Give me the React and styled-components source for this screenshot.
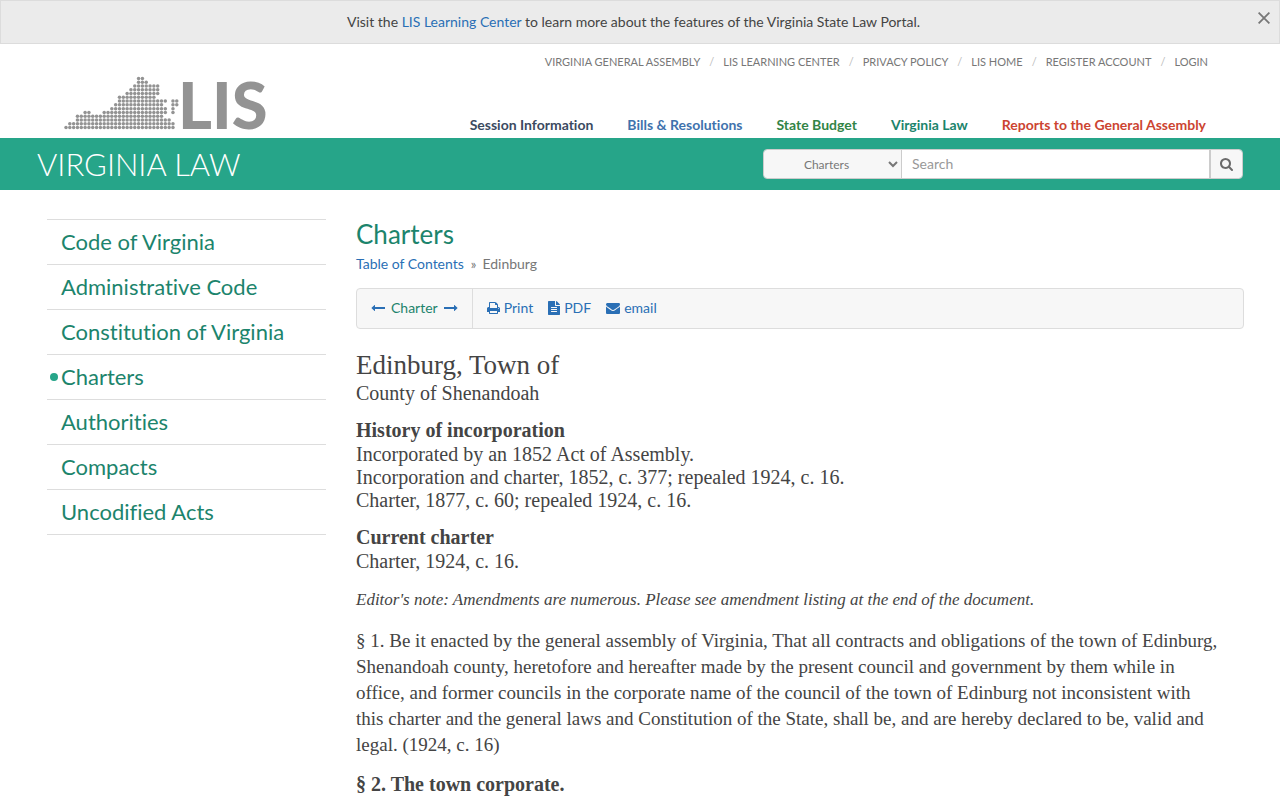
import React, { useState } from 'react';
import styled, { createGlobalStyle } from 'styled-components';

const GlobalStyle = createGlobalStyle`
  * {
    box-sizing: border-box;
  }

  body {
    margin: 0;
    background: #fff;
    color: #444;
    font-family: Lato, 'Liberation Sans', sans-serif;
    font-size: 14px;
    font-variant-ligatures: none;
    line-height: 20px;
  }

  a {
    color: #2a6fb5;
    text-decoration: none;
  }

  a:hover {
    text-decoration: underline;
  }
`;

const Notice = styled.div`
  display: grid;
  grid-template-columns: 24px 1fr 38px;
  padding: 11px 0 11px 1px;
  border: 1px solid #dcdcdc;
  background: #ebebeb;
  text-align: center;
`;

const NoticeText = styled.p`
  grid-column: 2;
  margin: 0;
`;

const CloseButton = styled.button`
  align-self: start;
  justify-self: end;
  display: flex;
  padding: 0 9px 0 0;
  border: none;
  background: none;
  color: #777;
  cursor: pointer;
`;

const Header = styled.header`
  display: flex;
  justify-content: space-between;
  height: 94px;
  padding: 8px 72px 0 64px;
`;

const LogoLink = styled.a`
  display: flex;
  align-items: flex-end;
  padding-bottom: 8px;

  svg {
    overflow: visible;
  }
`;

const HeaderLinks = styled.div`
  display: flex;
  flex-direction: column;
  align-items: flex-end;
  justify-content: space-between;
`;

const UtilityNav = styled.ul`
  display: flex;
  margin: 0;
  padding: 0;
  list-style: none;
  font-size: 11px;
  text-transform: uppercase;

  li + li::before {
    content: '/';
    padding: 0 9px;
    color: #bbb;
  }

  a {
    color: #777;
  }
`;

const PortalNav = styled.nav`
  display: flex;
  gap: 34px;
  padding: 0 2px 3px 0;
  font-weight: 700;
`;

const PortalLink = styled.a`
  color: ${props => props.$color};
`;

const Banner = styled.div`
  display: flex;
  align-items: center;
  justify-content: space-between;
  height: 52px;
  padding: 0 37px;
  background: #26a589;
`;

const SiteTitle = styled.a`
  color: #fff;
  font-size: 31px;
  font-weight: 300;
  line-height: 52px;
  text-transform: uppercase;
`;

const SearchForm = styled.form`
  display: flex;
  width: 480px;
  height: 30px;
  border: 1px solid #ccc;
  border-radius: 4px;
  overflow: hidden;
`;

const ScopeSelect = styled.select`
  width: 138px;
  border: none;
  border-right: 1px solid #ccc;
  background: #f7f7f7;
  color: #777;
  font-family: inherit;
  font-size: 12px;
  text-align: center;
`;

const SearchInput = styled.input`
  flex: 1;
  min-width: 0;
  padding: 0 10px 2px;
  border: none;
  color: #555;
  font-family: inherit;
  font-size: 14px;

  &::placeholder {
    color: #999;
  }
`;

const SearchButton = styled.button`
  display: flex;
  align-items: center;
  justify-content: center;
  width: 33px;
  padding: 0;
  border: none;
  border-left: 2px solid #ccc;
  background: #f7f7f7;
  color: #6b6b6b;
  cursor: pointer;
`;

const Page = styled.div`
  display: grid;
  grid-template-columns: 279px minmax(0, 1fr);
  align-items: start;
  gap: 30px;
  padding: 29px 36px 40px 47px;
`;

const SideNav = styled.ul`
  margin: 0;
  padding: 0;
  border-top: 1px solid #ddd;
  list-style: none;
`;

const SideItem = styled.li`
  display: flex;
  align-items: center;
  height: 45px;
  border-bottom: 1px solid #ddd;
  font-size: 22px;

  &::before {
    content: '';
    width: 8px;
    height: 8px;
    margin: 0 3px;
    border-radius: 50%;
    background: ${props => (props.$active ? '#26a589' : 'transparent')};
  }

  a {
    color: #1c846c;
  }
`;

const SectionTitle = styled.h2`
  margin: 0;
  color: #1c846c;
  font-size: 26px;
  font-weight: 400;
  line-height: 30px;
`;

const Breadcrumb = styled.nav`
  margin-top: 5px;
  color: #777;

  span {
    padding: 0 6px 0 7px;
    font-size: 13px;
  }
`;

const Toolbar = styled.div`
  display: flex;
  height: 41px;
  margin: 14px 0 20px;
  border: 1px solid #ddd;
  border-radius: 4px;
  background: #f7f7f7;
`;

const ToolGroup = styled.div`
  display: flex;
  align-items: center;
  gap: ${props => props.$gap};
  padding: 0 14px 2px;

  & + & {
    padding: 0 14px 2px;
    border-left: 1px solid #ddd;
  }
`;

const ToolLink = styled.a`
  display: flex;
  align-items: center;
  gap: 4px;
`;

const ChapterLink = styled.a`
  color: #1c846c;
`;

const Document = styled.article`
  font-family: 'Liberation Serif', serif;
  font-size: 20px;
  line-height: 23px;
`;

const DocTitle = styled.h1`
  margin: 0;
  font-size: 27px;
  font-weight: 400;
  line-height: 33px;
`;

const DocHeading = styled.h3`
  margin: 0;
  font-size: 20px;
  line-height: 25px;
`;

const DocBlock = styled.p`
  margin: 0 0 13px;
`;

const EditorNote = styled.p`
  margin: 0 0 17px;
  padding-top: 2px;
  font-size: 17px;
  font-style: italic;
`;

const Statute = styled.p`
  margin: 0 0 14px;
  padding-right: 24px;
  font-size: 19px;
  line-height: 26px;
`;

const VIRGINIA_ROWS = [
  [[19, 20]],
  [[19, 21]],
  [[18, 24]],
  [[17, 24]],
  [[16, 24]],
  [[14, 23]],
  [[14, 26], [28, 29]],
  [[13, 25], [28, 29]],
  [[12, 26], [28, 28]],
  [[5, 6], [10, 26], [28, 28]],
  [[3, 25]],
  [[3, 27]],
  [[1, 28]],
  [[0, 28]],
];

const DOT_STEP = 3.82;

const Logo = () => (
  <svg width="204" height="54" viewBox="0 0 204 54" fill="#939393" role="img" aria-label="LIS">
    {VIRGINIA_ROWS.map((spans, row) =>
      spans.map(([from, to]) =>
        Array.from({ length: to - from + 1 }, (_, i) => (
          <circle
            key={`${row}-${from + i}`}
            cx={2 + (from + i) * DOT_STEP}
            cy={2.4 + row * 3.78}
            r="1.75"
          />
        ))
      )
    )}
    <text x="114" y="53" fontFamily="Lato, 'Liberation Sans', sans-serif" fontSize="65" fontWeight="900">
      LIS
    </text>
  </svg>
);

const GLYPHS = {
  search: {
    width: 1664,
    d: 'M1152 832q0-185-131.5-316.5t-316.5-131.5-316.5 131.5-131.5 316.5 131.5 316.5 316.5 131.5 316.5-131.5 131.5-316.5zm512 832q0 52-38 90t-90 38q-54 0-90-38l-343-342q-179 124-399 124-143 0-273.5-55.5t-225-150-150-225-55.5-273.5 55.5-273.5 150-225 225-150 273.5-55.5 273.5 55.5 225 150 150 225 55.5 273.5q0 220-124 399l343 343q37 37 37 90z',
  },
  print: {
    width: 1664,
    d: 'M384 1536h896v-256h-896v256zM384 896h896v-384h-160q-40 0-68-28t-28-68v-160h-640v640zM1536 960q0-26-19-45t-45-19-45 19-19 45 19 45 45 19 45-19 19-45zM1664 960v416q0 13-9.5 22.5t-22.5 9.5h-224v160q0 40-28 68t-68 28h-960q-40 0-68-28t-28-68v-160h-224q-13 0-22.5-9.5t-9.5-22.5v-416q0-79 56.5-135.5t135.5-56.5h64v-544q0-40 28-68t68-28h672q40 0 88 20t76 48l152 152q28 28 48 76t20 88v256h64q79 0 135.5 56.5t56.5 135.5z',
  },
  file: {
    width: 1536,
    d: 'M1024 0v512h512q-4-76-68-140l-304-304q-64-64-140-68zM992 640q-40 0-68-28t-28-68v-544h-800q-40 0-68 28t-28 68v1600q0 40 28 68t68 28h1344q40 0 68-28t28-68v-1056zM384 800q0-32 32-32h704q32 0 32 32v64q0 32-32 32h-704q-32 0-32-32zM1152 1376q0 32-32 32h-704q-32 0-32-32v-64q0-32 32-32h704q32 0 32 32zM1152 1120q0 32-32 32h-704q-32 0-32-32v-64q0-32 32-32h704q32 0 32 32z',
  },
  envelope: {
    width: 1792,
    d: 'M1792 710v794q0 66-47 113t-113 47h-1472q-66 0-113-47t-47-113v-794q44 49 101 87 362 246 497 345 57 42 92.5 65.5t94.5 48 110 24.5h2q51 0 110-24.5t94.5-48 92.5-65.5q170-123 498-345 57-39 100-87zm0-294q0 79-49 151t-122 123q-376 261-468 325-10 7-42.5 31t-54 38.5-52 32.5-57.5 27-50 9h-2q-23 0-50-9t-57.5-27-52-32.5-54-38.5-42.5-31q-91-64-262-182.5t-205-142.5q-62-42-117-115.5t-55-136.5q0-78 41.5-130t118.5-52h1472q65 0 112.5 47t47.5 113z',
  },
  left: {
    width: 1792,
    d: 'M1792 800v192q0 14-9 23t-23 9h-1248v224q0 21-19 29t-35-5l-384-350q-10-10-10-23 0-14 10-24l384-354q16-14 35-6 19 9 19 29v224h1248q14 0 23 9t9 23z',
  },
  right: {
    width: 1792,
    d: 'M0 800v192q0 14 9 23t23 9h1248v224q0 21 19 29t35-5l384-350q10-10 10-23 0-14-10-24l-384-354q-16-14-35-6-19 9-19 29v224h-1248q-14 0-23 9t-9 23z',
  },
};

const Glyph = ({ name }) => {
  const { width, d } = GLYPHS[name];
  return (
    <svg width={Math.round(width / 128)} height="14" viewBox={`0 0 ${width} 1792`} fill="currentColor" fillRule="evenodd" aria-hidden="true">
      <path d={d} />
    </svg>
  );
};

const utilityLinks = ['Virginia General Assembly', 'LIS Learning Center', 'Privacy Policy', 'LIS Home', 'Register Account', 'Login'];

const portals = [
  { label: 'Session Information', color: '#3b4a5f' },
  { label: 'Bills & Resolutions', color: '#3f72ad' },
  { label: 'State Budget', color: '#328446' },
  { label: 'Virginia Law', color: '#1c846c' },
  { label: 'Reports to the General Assembly', color: '#cc4431' },
];

const sections = ['Code of Virginia', 'Administrative Code', 'Constitution of Virginia', 'Charters', 'Authorities', 'Compacts', 'Uncodified Acts'];

const App = () => {
  const [showNotice, setShowNotice] = useState(true);
  const [scope, setScope] = useState('Charters');
  const [query, setQuery] = useState('');

  return (
    <>
      <GlobalStyle />
      {showNotice && (
        <Notice>
          <NoticeText>
            Visit the <a href="#learn">LIS Learning Center</a> to learn more about the features of the Virginia State Law Portal.
          </NoticeText>
          <CloseButton type="button" aria-label="Close" onClick={() => setShowNotice(false)}>
            <svg width="12" height="12" viewBox="0 0 12 12" stroke="currentColor" strokeWidth="1.8">
              <path d="M.6.6l10.8 10.8M11.4.6L.6 11.4" />
            </svg>
          </CloseButton>
        </Notice>
      )}

      <Header>
        <LogoLink href="#home"><Logo /></LogoLink>
        <HeaderLinks>
          <UtilityNav>
            {utilityLinks.map((label) => (
              <li key={label}><a href="#utility">{label}</a></li>
            ))}
          </UtilityNav>
          <PortalNav>
            {portals.map(({ label, color }) => (
              <PortalLink key={label} href="#portal" $color={color}>{label}</PortalLink>
            ))}
          </PortalNav>
        </HeaderLinks>
      </Header>

      <Banner>
        <SiteTitle href="#law">Virginia Law</SiteTitle>
        <SearchForm onSubmit={(e) => e.preventDefault()}>
          <ScopeSelect aria-label="Search in" value={scope} onChange={(e) => setScope(e.target.value)}>
            {sections.map((name) => (
              <option key={name}>{name}</option>
            ))}
          </ScopeSelect>
          <SearchInput
            type="text"
            aria-label="Search"
            placeholder="Search"
            value={query}
            onChange={(e) => setQuery(e.target.value)}
          />
          <SearchButton type="submit" aria-label="Submit search"><Glyph name="search" /></SearchButton>
        </SearchForm>
      </Banner>

      <Page>
        <SideNav>
          {sections.map((name) => (
            <SideItem key={name} $active={name === 'Charters'}>
              <a href="#section">{name}</a>
            </SideItem>
          ))}
        </SideNav>

        <main>
          <SectionTitle>Charters</SectionTitle>
          <Breadcrumb aria-label="Breadcrumb">
            <a href="#toc">Table of Contents</a><span>»</span>Edinburg
          </Breadcrumb>

          <Toolbar>
            <ToolGroup $gap="6px">
              <ToolLink href="#previous" aria-label="Previous charter"><Glyph name="left" /></ToolLink>
              <ChapterLink href="#charter">Charter</ChapterLink>
              <ToolLink href="#next" aria-label="Next charter"><Glyph name="right" /></ToolLink>
            </ToolGroup>
            <ToolGroup $gap="15px">
              <ToolLink href="#print"><Glyph name="print" />Print</ToolLink>
              <ToolLink href="#pdf"><Glyph name="file" />PDF</ToolLink>
              <ToolLink href="#email"><Glyph name="envelope" />email</ToolLink>
            </ToolGroup>
          </Toolbar>

          <Document>
            <DocTitle>Edinburg, Town of</DocTitle>
            <DocBlock>County of Shenandoah</DocBlock>
            <DocHeading>History of incorporation</DocHeading>
            <DocBlock>
              Incorporated by an 1852 Act of Assembly.<br />
              Incorporation and charter, 1852, c. 377; repealed 1924, c. 16.<br />
              Charter, 1877, c. 60; repealed 1924, c. 16.
            </DocBlock>
            <DocHeading>Current charter</DocHeading>
            <DocBlock>Charter, 1924, c. 16.</DocBlock>
            <EditorNote>
              Editor's note: Amendments are numerous. Please see amendment listing at the end of the document.
            </EditorNote>
            <Statute>
              § 1. Be it enacted by the general assembly of Virginia, That all contracts and obligations of the town of
              Edinburg, Shenandoah county, heretofore and hereafter made by the present council and government by them
              while in office, and former councils in the corporate name of the council of the town of Edinburg not
              inconsistent with this charter and the general laws and Constitution of the State, shall be, and are
              hereby declared to be, valid and legal. (1924, c. 16)
            </Statute>
            <DocHeading>§ 2. The town corporate.</DocHeading>
          </Document>
        </main>
      </Page>
    </>
  );
};

export default App;
